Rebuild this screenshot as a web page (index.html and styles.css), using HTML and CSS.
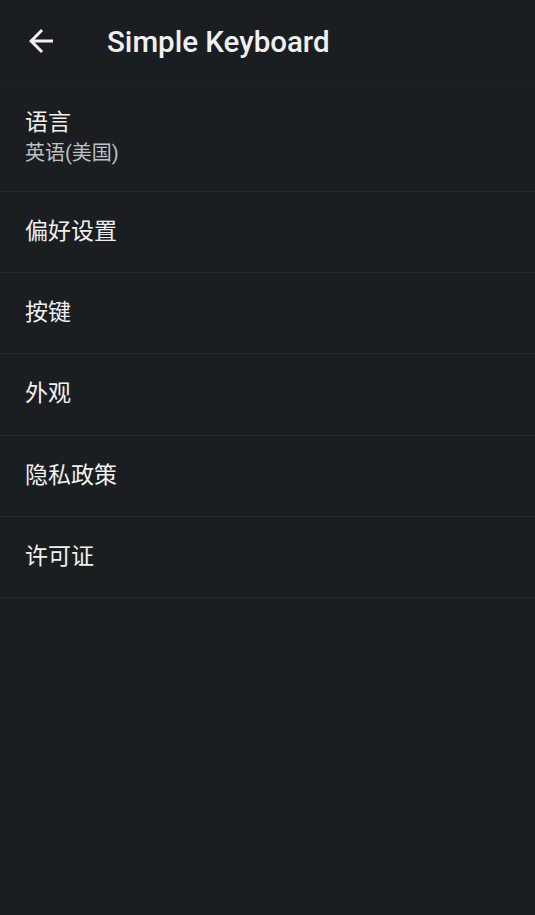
FILE: index.html
```html
<!DOCTYPE html>
<html lang="zh-CN">
 <head>
	<meta charset="UTF-8">
	<title>Simple Keyboard</title>
	<link rel="stylesheet" href="styles.css">
 </head>
 <body>
	<div class="toolbar">
		<svg class="back" viewBox="0 0 24 24"><path d="M20 11H7.83l5.59-5.59L12 4l-8 8 8 8 1.41-1.41L7.83 13H20v-2z"/></svg>
		<h1 class="title">Simple Keyboard</h1>
	</div>
	<ul class="list">
		<li class="item tall">
			<span class="label">语言</span>
			<span class="summary">英语(美国)</span>
		</li>
		<li class="item"><span class="label">偏好设置</span></li>
		<li class="item"><span class="label">按键</span></li>
		<li class="item"><span class="label">外观</span></li>
		<li class="item"><span class="label">隐私政策</span></li>
		<li class="item"><span class="label">许可证</span></li>
	</ul>
 </body>
</html>
```
FILE: styles.css
```css
*{margin:0;padding:0;}
body{
	background:#1b1e21;
	font-family:Roboto,"Noto Sans CJK SC",sans-serif;
	color:#f0f0f0;
	width:535px;
	height:915px;
}

.toolbar{
	display:flex;
	align-items:center;
	height:82px;
	border-bottom:1px solid #1f2326;
}
.back{
	width:36px;
	height:36px;
	margin-left:23px;
	fill:#f2f2f2;
}
.title{
	margin-left:48px;
	font-size:29.5px;
	font-weight:500;
	color:#f0f0f0;
	margin-top:2px;
}

.list{list-style:none;}
.item{
	display:flex;
	flex-direction:column;
	justify-content:center;
	height:80.2px;
	padding-left:25px;
	border-bottom:1px solid #25292c;
}
.item.tall{
	height:108px;
}
.label{
	font-size:23px;
	line-height:30px;
	color:#f0f0f0;
}
.summary{
	font-size:20px;
	line-height:27px;
	margin-top:2px;
	color:#bfc1c3;
}
```
